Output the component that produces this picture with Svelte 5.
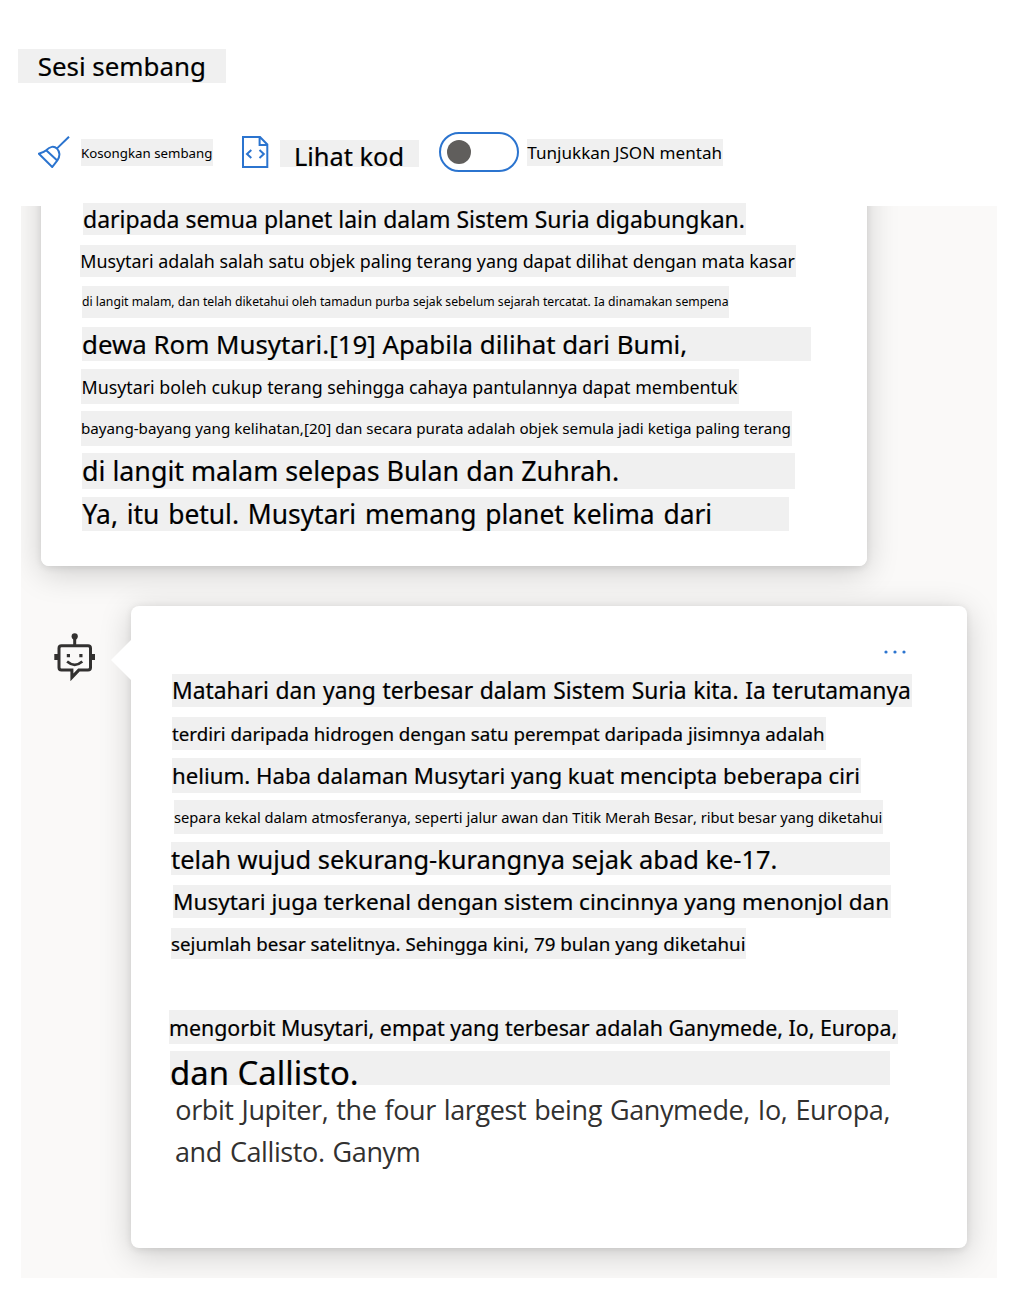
<script>
  // Each line: block position (x, gap above), block size (w, h), text inset,
  // font size and baseline offset from the top of the block.
  const userLines = [
    { text: 'daripada semua planet lain dalam Sistem Suria digabungkan.', x: 42, gap: -3, w: 663, h: 32, inset: 0, size: 22.97, base: 25 },
    { text: 'Musytari adalah salah satu objek paling terang yang dapat dilihat dengan mata kasar', x: 39, gap: 10, w: 716, h: 32, inset: 0.2, size: 17.87, base: 23 },
    { text: 'di langit malam, dan telah diketahui oleh tamadun purba sejak sebelum sejarah tercatat. Ia dinamakan sempena', x: 41, gap: 9, w: 647, h: 32, inset: 0, size: 12.22, base: 21 },
    { text: 'dewa Rom Musytari.[19] Apabila dilihat dari Bumi,', x: 41, gap: 9, w: 729, h: 34, inset: 0, size: 25.85, base: 28 },
    { text: 'Musytari boleh cukup terang sehingga cahaya pantulannya dapat membentuk', x: 40, gap: 8, w: 658, h: 35, inset: 0.5, size: 17.84, base: 25 },
    { text: 'bayang-bayang yang kelihatan,[20] dan secara purata adalah objek semula jadi ketiga paling terang', x: 40, gap: 7, w: 711, h: 35, inset: 0, size: 15.17, base: 23.5 },
    { text: 'di langit malam selepas Bulan dan Zuhrah.', x: 41, gap: 7, w: 713, h: 36, inset: 0, size: 26.83, base: 28.4 },
    { text: 'Ya, itu betul. Musytari memang planet kelima dari', x: 41, gap: 8, w: 707, h: 34, inset: 0.5, size: 26.4, base: 28, words: 1.9 }
  ];

  const botLines = [
    { text: 'Matahari dan yang terbesar dalam Sistem Suria kita. Ia terutamanya', x: 41, gap: 0, w: 740, h: 33, inset: 0, size: 22.85, base: 25.4, words: 0.7 },
    { text: 'terdiri daripada hidrogen dengan satu perempat daripada jisimnya adalah', x: 41, gap: 10, w: 654, h: 33, inset: 0, size: 18.72, base: 23.8 },
    { text: 'helium. Haba dalaman Musytari yang kuat mencipta beberapa ciri', x: 41, gap: 8, w: 689, h: 35, inset: 0, size: 22.23, base: 26.8 },
    { text: 'separa kekal dalam atmosferanya, seperti jalur awan dan Titik Merah Besar, ribut besar yang diketahui', x: 43, gap: 7, w: 709, h: 34, inset: 0, size: 14.7, base: 22.8, loose: true },
    { text: 'telah wujud sekurang-kurangnya sejak abad ke-17.', x: 40, gap: 8, w: 719, h: 33, inset: 0, size: 25.42, base: 27 },
    { text: 'Musytari juga terkenal dengan sistem cincinnya yang menonjol dan', x: 42, gap: 10, w: 718, h: 33, inset: 0, size: 22.57, base: 26 },
    { text: 'sejumlah besar satelitnya. Sehingga kini, 79 bulan yang diketahui', x: 40, gap: 10, w: 575, h: 31, inset: 0, size: 18.75, base: 22.8 },
    { text: 'mengorbit Musytari, empat yang terbesar adalah Ganymede, Io, Europa,', x: 38, gap: 51, w: 729, h: 34, inset: 0, size: 21.35, base: 25.8 },
    { text: 'dan Callisto.', x: 39, gap: 7, w: 720, h: 34, inset: 0, size: 32.9, base: 35 }
  ];

  // Noto Sans: the baseline sits 0.388em below the middle of the line box.
  const lineStyle = (l) =>
    `margin:${l.gap}px 0 0 ${l.x}px;width:${l.w}px;height:${l.h}px;font-size:${l.size}px;` +
    `text-indent:${l.inset}px;word-spacing:${l.words ?? 0}px;line-height:${2 * (l.base - 0.388 * l.size)}px`;
</script>

<main class="page">
  <header>
    <h1 class="label title">Sesi sembang</h1>
    <div class="toolbar">
      <button class="tool clear" type="button">
        <svg width="32" height="32" viewBox="0 0 32 32" fill="none" stroke="#2b74cf" stroke-width="2">
          <path d="M31 .7 19 12.4M.9 17.7 14.2 31 19.4 24.3C22.6 20 21.6 15.3 19 12.6 16 9.6 12 10.4 8.2 14.3 6.4 16 4 16.7.9 17.7ZM8.2 14.3 19.2 24.6" />
        </svg>
        <span class="label">Kosongkan sembang</span>
      </button>
      <button class="tool code" type="button">
        <svg width="27" height="32" viewBox="0 0 27 32" fill="none" stroke="#2b74cf" stroke-width="2">
          <path d="M1 1H18L25.3 8.5V31H1ZM17.6 1V9H25.3M9.3 14 5 18 9.3 22M17.5 14 21.8 18 17.5 22" />
        </svg>
        <span class="label">Lihat kod</span>
      </button>
      <div class="tool raw">
        <span class="switch"><i></i></span>
        <span class="label">Tunjukkan JSON mentah</span>
      </div>
    </div>
  </header>

  <section class="chat">
    <article class="bubble first">
      {#each userLines as line}
        <p class="line" class:strong={line.size > 18} class:loose={line.loose} style={lineStyle(line)}>{line.text}</p>
      {/each}
    </article>

    <div class="row">
      <svg class="bot" width="42" height="50" viewBox="0 0 42 50" fill="none" stroke="#323130" stroke-width="3">
        <circle cx="20.7" cy="3.4" r="3.1" fill="#323130" stroke="none" />
        <path d="M20.7 4V12.5M7.5 12.8H34A2.5 2.5 0 0 1 36.5 15.3V34.6A2.5 2.5 0 0 1 34 37.1H24.8L17.9 44.4V37.1H7.5A2.5 2.5 0 0 1 5 34.6V15.3A2.5 2.5 0 0 1 7.5 12.8Z" />
        <path d="M13.1 28.6Q20.7 35.2 28.3 28.6" stroke-width="2.6" />
        <path d="M.3 21H4V27H.3ZM37.5 21H41V27H37.5ZM12.8 21H16V24.3H12.8ZM25.3 21H28.5V24.3H25.3Z" fill="#323130" stroke="none" />
      </svg>
      <article class="bubble second">
        <button class="more" type="button" aria-label="Menu">
          <svg width="22" height="4" viewBox="0 0 22 4" fill="#2b74cf">
            <circle cx="2" cy="2" r="1.6" /><circle cx="11" cy="2" r="1.6" /><circle cx="20" cy="2" r="1.6" />
          </svg>
        </button>
        {#each botLines as line}
          <p class="line" class:strong={line.size > 18} class:loose={line.loose} style={lineStyle(line)}>{line.text}</p>
        {/each}
        <p class="source">orbit Jupiter, the four largest being Ganymede, Io, Europa,<br />and Callisto. Ganym</p>
      </article>
    </div>
  </section>
</main>

<style>
  :global(body) { background: #fff; }
  .page {
    box-sizing: border-box;
    width: 1014px;
    height: 1292px;
    overflow: hidden;
    font-family: 'Noto Sans', 'Open Sans', sans-serif;
    color: #000;
  }
  header { box-sizing: border-box; height: 206px; padding: 49px 18px 0; }
  button { border: 0; padding: 0; background: none; font: inherit; color: inherit; }
  .label {
    display: block;
    box-sizing: border-box;
    background: #f0f0f0;
    white-space: pre;
  }
  .title {
    margin: 0;
    width: 208px;
    height: 34px;
    padding-left: 19px;
    font-size: 25.9px;
    font-weight: 400;
    line-height: 34.6px;
    text-indent: 0.7px;
  }
  .toolbar { display: flex; height: 40px; margin: 49px 0 0 20px; }
  .tool { display: flex; align-items: flex-start; text-align: left; }
  .tool svg { flex: none; margin-top: 4px; }
  .clear .label {
    width: 132px; height: 27px; margin: 7px 0 0 11px;
    font-size: 13.28px; line-height: 29px;
  }
  .code { margin-left: 29px; }
  .code .label {
    width: 139px; height: 27px; margin: 8px 0 0 11px; padding-left: 13px;
    font-size: 25.4px; line-height: 32px; text-indent: 1px;
  }
  .raw { margin-left: 20px; }
  .raw .label {
    width: 196px; height: 27px; margin: 7px 0 0 8px;
    font-size: 17.08px; line-height: 27px; text-indent: 0.3px;
  }
  .switch {
    display: flex;
    align-items: center;
    box-sizing: border-box;
    width: 80px;
    height: 40px;
    padding-left: 6px;
    border: 2px solid #2b74cf;
    border-radius: 20px;
  }
  .switch i { width: 24px; height: 24px; border-radius: 50%; background: #605e5c; }

  .chat {
    position: relative;
    z-index: 0;
    width: 976px;
    height: 1072px;
    margin-left: 21px;
    background: #faf9f8;
    clip-path: inset(-3px 0 0 0);
  }
  .bubble { position: relative; box-sizing: border-box; background: #fff; }
  .first { display: flow-root; width: 826px; height: 360px; margin-left: 20px; border-radius: 0 0 8px 8px; }
  /* The bubble is scrolled under the header, so its shadow runs on past the top edge. */
  .first::before {
    content: '';
    position: absolute;
    z-index: -1;
    inset: -60px 0 0;
    border-radius: 8px;
    box-shadow: 0 6.4px 32px rgba(0, 0, 0, 0.18), 0 1.2px 7px rgba(0, 0, 0, 0.09);
    clip-path: inset(60px -60px -60px -60px);
  }
  .row { display: flex; padding: 40px 30px 0 33px; }
  .bot { position: relative; z-index: 1; flex: none; margin-top: 27px; }
  .second {
    display: flow-root;
    width: 836px;
    height: 642px;
    margin-left: 35px;
    border-radius: 8px;
    box-shadow: 0 6.4px 32px rgba(0, 0, 0, 0.18), 0 1.2px 7px rgba(0, 0, 0, 0.09);
  }
  .second::before {
    content: '';
    position: absolute;
    left: -20px;
    top: 34px;
    border: solid transparent;
    border-width: 20px 20px 20px 0;
    border-right-color: #fff;
  }
  .more { display: flex; height: 24px; margin: 44px 0 0 752.5px; }
  .line {
    display: block;
    background: #f0f0f0;
    white-space: pre;
  }
  .loose { font-kerning: none; }
  .strong, .title, .code .label { -webkit-text-stroke: 0.2px #000; }
  .source {
    margin: 4px 0 0 44px;
    font-family: 'Open Sans', sans-serif;
    font-size: 27px;
    line-height: 42px;
    letter-spacing: -0.4px;
    word-spacing: 1.4px;
    text-indent: 0.3px;
    color: #323130;
    white-space: nowrap;
  }
</style>
